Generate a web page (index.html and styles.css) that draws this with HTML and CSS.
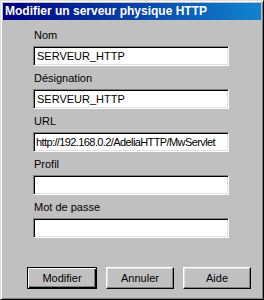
FILE: index.html
```html
<!DOCTYPE html>
<html>
<head>
<meta charset="utf-8">
<link rel="stylesheet" href="styles.css">
</head>
<body>
<div class="window">
  <div class="titlebar">Modifier un serveur physique HTTP</div>
  <div class="content">
    <div class="field">
      <label class="label">Nom</label>
      <div class="input">SERVEUR_HTTP</div>
    </div>
    <div class="field">
      <label class="label">Désignation</label>
      <div class="input">SERVEUR_HTTP</div>
    </div>
    <div class="field">
      <label class="label">URL</label>
      <div class="input tight">http://192.168.0.2/AdeliaHTTP/MwServlet</div>
    </div>
    <div class="field">
      <label class="label">Profil</label>
      <div class="input"></div>
    </div>
    <div class="field">
      <label class="label">Mot de passe</label>
      <div class="input"></div>
    </div>
  </div>
  <div class="buttons">
    <div class="btn default"><span>Modifier</span></div>
    <div class="btn"><span>Annuler</span></div>
    <div class="btn"><span>Aide</span></div>
  </div>
</div>
</body>
</html>
```

FILE: styles.css
```css
html, body {
  margin: 0;
  padding: 0;
  background: #c0c0c0;
}
.window {
  width: 264px;
  height: 300px;
  box-sizing: border-box;
  background: #c0c0c0;
  border: 1px solid;
  border-color: #dfdfdf #000 #000 #dfdfdf;
  box-shadow: inset 1px 1px #fff, inset -1px -1px #808080;
  padding: 2px;
  font-family: "Liberation Sans", Arial, sans-serif;
  font-size: 11px;
  color: #000;
  display: flex;
  flex-direction: column;
}
.titlebar {
  height: 17px;
  line-height: 17px;
  background: linear-gradient(to right, #000080, #1084d0);
  color: #fff;
  font-weight: bold;
  font-size: 12px;
  padding-left: 2px;
  white-space: nowrap;
}
.content {
  padding: 9px 0 0 30px;
  display: flex;
  flex-direction: column;
}
.field {
  display: flex;
  flex-direction: column;
  margin-bottom: 6px;
}
.label {
  display: block;
  height: 13px;
  line-height: 13px;
  padding-left: 1px;
  margin-bottom: 4px;
}
.input {
  width: 196px;
  height: 20px;
  box-sizing: border-box;
  background: #fff;
  border: 1px solid;
  border-color: #808080 #fff #fff #808080;
  box-shadow: inset 1px 1px #000, inset -1px -1px #dfdfdf;
  padding: 0 0 0 3px;
  line-height: 18px;
  white-space: nowrap;
  overflow: hidden;
}
.input.tight {
  letter-spacing: -0.6px;
  padding-left: 2px;
}
.buttons {
  display: flex;
  margin-top: auto;
  margin-bottom: 8px;
  padding-left: 24px;
  gap: 9px;
}
.btn {
  width: 68px;
  height: 22px;
  box-sizing: border-box;
  background: #c0c0c0;
  border: 1px solid;
  border-color: #fff #000 #000 #fff;
  box-shadow: inset -1px -1px #808080, inset 1px 1px #dfdfdf;
  display: flex;
  align-items: center;
  justify-content: center;
}
.btn.default {
  width: 70px;
  border-color: #000;
  box-shadow: inset 1px 1px #fff, inset -1px -1px #000, inset -2px -2px #808080;
}
```
